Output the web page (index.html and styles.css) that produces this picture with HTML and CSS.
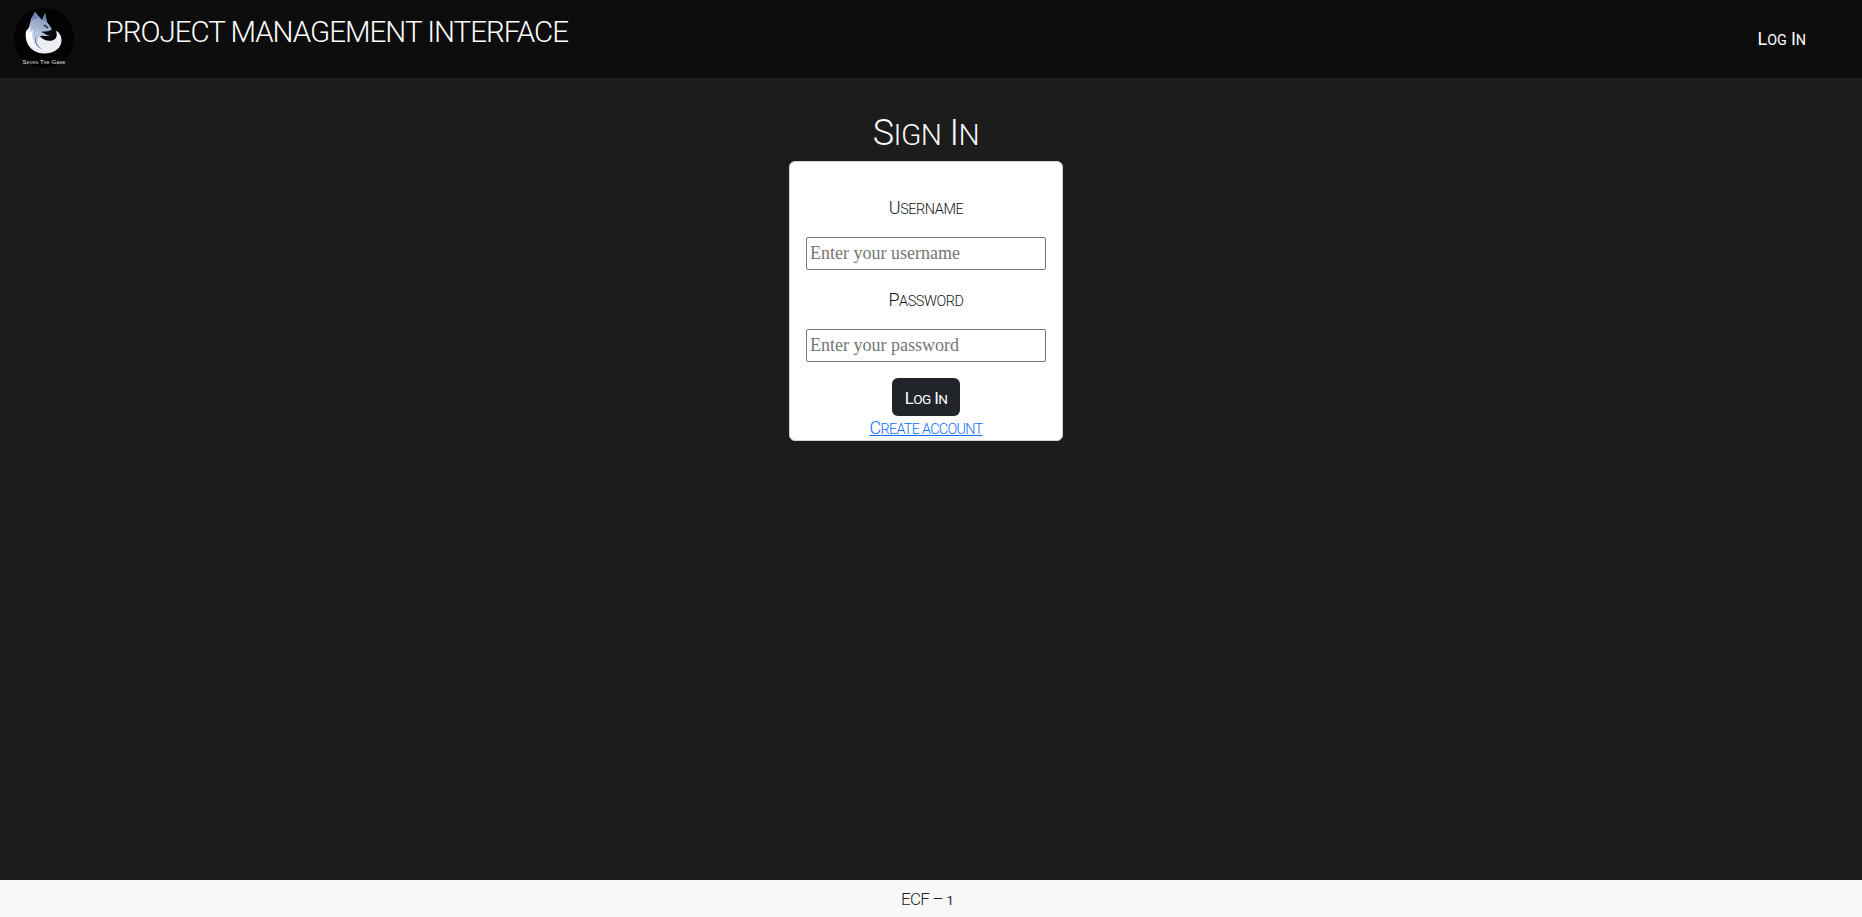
FILE: index.html
```html
<!DOCTYPE html>
<html lang="en">
<head>
<meta charset="utf-8">
<title>Project Management Interface</title>
<link rel="stylesheet" href="styles.css">
</head>
<body>
<header class="topbar">
  <svg class="logo" viewBox="0 0 60 60" role="img" aria-label="Logo">
    <defs>
      <linearGradient id="fur" x1="0.6" y1="0" x2="0.3" y2="1">
        <stop offset="0" stop-color="#7d8fb8"/><stop offset="0.45" stop-color="#a9b8d6"/><stop offset="1" stop-color="#f2f4f9"/>
      </linearGradient>
    </defs>
    <circle cx="30" cy="30" r="30" fill="#020203"/>
    <path d="M12 23C10 35 17 45 30 45.500c11 0 18-6 17.500-14-.5-5-3-8-7-9.500 3 4 3 8-1 10-5 2-9 0-12-2l-7-7z" fill="#eceef3"/>
    <path d="M12 25l3-6 2-8 4-7 7 8 3-7 2 9 3 4 4 7-3 3-6 0c-4-1-6 0-7 4-1 4 2 8 5 11-10-1-16-9-17-18z" fill="url(#fur)"/>
    <path d="M21 4l-4 10 3-3 4-1zM31 5l-2 7 4 2z" fill="#6c7fae"/>
    <path d="M12 23l5-4-2 6 4-3c-2 8 0 14 7 20-9-3-15-11-14-19z" fill="#fff"/>
    <path d="M27 24c3-1 7 0 10-2l3-2c4 4 3 9-1 11-4 2-8 0-10-3 3 2 6 2 8 0-4 0-6-3-10-4z" fill="#05070d"/>
    <path d="M23 27c-3 6 0 11 5 14-4-1-7-5-7-9 0-2 1-4 2-5z" fill="#4469ae"/>
    <path d="M30 17l4 3" stroke="#101522" stroke-width="1.300"/>
    <text x="30" y="56" class="logo-text" textLength="43" lengthAdjust="spacing">Seven The Game</text>
  </svg>
  <h1 class="brand">PROJECT MANAGEMENT INTERFACE</h1>
  <a class="nav-link">L<span class="sc">og</span> I<span class="sc">n</span></a>
</header>
<main class="content">
  <h2 class="title">S<span class="sc">ign</span> I<span class="sc">n</span></h2>
  <form class="card">
    <label class="label label-user" for="user">U<span class="sc">sername</span></label>
    <input class="field" id="user" type="text" placeholder="Enter your username">
    <label class="label label-pass" for="pass">P<span class="sc">assword</span></label>
    <input class="field" id="pass" type="password" placeholder="Enter your password">
    <button class="submit" type="button">L<span class="sc">og</span> I<span class="sc">n</span></button>
    <a class="create" href="#">C<span class="sc">reate account</span></a>
  </form>
</main>
<footer class="footer">ECF – <span class="one">1</span></footer>
</body>
</html>
```
FILE: styles.css
```css
* { box-sizing: border-box; }
body {
  margin: 0;
  height: 917px;
  display: flex;
  flex-direction: column;
  overflow: hidden;
  background: #1c1c1c;
  color: #212529;
  font: 300 18px/24px Roboto, sans-serif;
}
.sc { text-transform: uppercase; font-size: 0.8em; line-height: 1px; }
.topbar {
  height: 78px;
  flex: none;
  display: flex;
  align-items: flex-start;
  background: #0d0d0d;
  color: #fff;
  padding: 8px 56px 0 14px;
}
.logo { width: 60px; height: 60px; }
.logo-text { font: 400 6px "Liberation Sans", sans-serif; font-variant: small-caps; fill: #e4e4e4; text-anchor: middle; }
.brand {
  margin: 6px 0 0 31.500px;
  font-size: 29.500px;
  line-height: 36px;
  font-weight: 300;
  letter-spacing: -1px;
  white-space: nowrap;
}
.nav-link { margin: 19px 0 0 auto; font-weight: 400; letter-spacing: -0.1px; }
.content { flex: 1; width: 1852px; display: flex; flex-direction: column; align-items: center; }
.title {
  margin: 34px 0 6px;
  font-size: 36px;
  line-height: 43px;
  font-weight: 300;
  letter-spacing: -0.6px;
  color: #f8f8f8;
}
.title .sc { font-size: 0.83em; }
.card {
  width: 274px;
  height: 280px;
  background: #fff;
  border: 1px solid #d2d2d2;
  border-radius: 6px;
  display: flex;
  flex-direction: column;
  align-items: center;
}
.card > * { flex-shrink: 0; }
.label { letter-spacing: -0.4px; color: #101418; }
.label-user { margin: 34px 0 17px; }
.label-pass { margin: 18px 0 17px; }
.field {
  width: 240px;
  height: 33px;
  padding: 1px 3px;
  border: 1px solid #767676;
  border-radius: 2px;
  font: 18px "Liberation Serif", serif;
}
.field::placeholder { color: #757575; }
.submit {
  width: 68px;
  height: 38px;
  margin-top: 16px;
  padding: 2px 0 0;
  border: 0;
  border-radius: 6px;
  background: #212529;
  color: #fff;
  font: 400 17px/24px Roboto, sans-serif;
  letter-spacing: -0.6px;
}
.create { margin-top: 0; color: #0d6efd; letter-spacing: -0.7px; text-decoration: underline; }
.footer {
  height: 37px;
  flex: none;
  width: 100%;
  padding: 7px 8px 0 0;
  background: #f8f8f8;
  text-align: center;
  font-size: 17px;
  letter-spacing: -0.7px;
}
.one { font-size: 13px; font-weight: 400; }
```
